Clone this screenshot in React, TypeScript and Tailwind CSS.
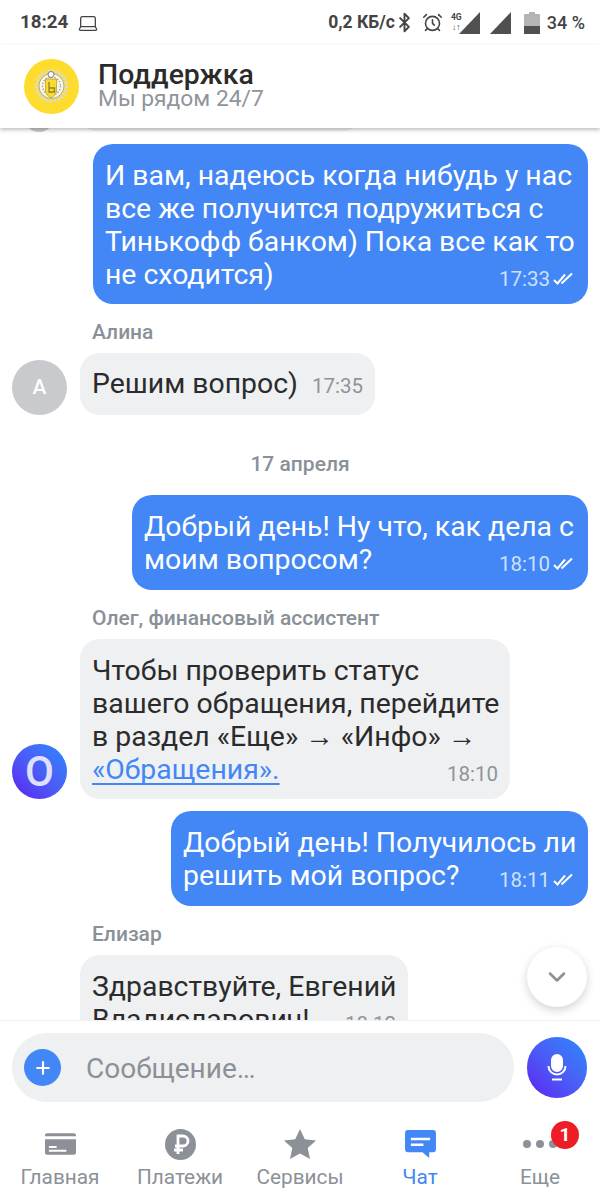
import { AlarmClock, Bluetooth, ChevronDown, Laptop, Plus } from "lucide-react";

const DoubleCheck = () => (
  <svg width="24" height="14" viewBox="0 0 24 14" fill="none" stroke="#ffffff" strokeWidth="2" className="ml-[2px]">
    <path d="M2 8l3.500 3.500L13 2.500" />
    <path d="M9.500 11.500L20 1.500" />
  </svg>
);

const Signal = () => (
  <svg width="21" height="22" viewBox="0 0 21 22">
    <path d="M21 0v22H0z" fill="#505050" />
  </svg>
);

const Logo = () => (
  <svg width="55" height="55" viewBox="0 0 55 55">
    <circle cx="27.5" cy="27.5" r="27.5" fill="#fddc2e" />
    <circle cx="27.5" cy="27" r="15" fill="none" stroke="#dedbc8" strokeWidth="3.500" strokeDasharray="2.200 1.500" />
    <circle cx="27.5" cy="27" r="12.500" fill="#faf8ea" stroke="#8f8f82" strokeWidth="0.7" />
    <circle cx="27.5" cy="27" r="9" fill="none" stroke="#a9a99a" strokeWidth="1.500" strokeDasharray="1.500 1.500" />
    <circle cx="27" cy="15.500" r="3" fill="#fff" stroke="#6f6f66" strokeWidth="0.9" />
    <path d="M21.500 20h11v12c0 3-2.500 5-5.500 7-3-2-5.500-4-5.500-7z" fill="#fbd92f" stroke="#a89a30" strokeWidth="0.7" />
    <path d="M25 23v10h5.500v-4H25" fill="none" stroke="#8f842a" strokeWidth="1.300" />
  </svg>
);

const Lines = ({ lines, stamp }: { lines: React.ReactNode[]; stamp: React.ReactNode }) => (
  <>
    {lines.slice(0, -1).map((line, i) => (
      <div key={i} className="whitespace-nowrap">{line}</div>
    ))}
    <div className="flex justify-between whitespace-nowrap">
      <div>{lines[lines.length - 1]}</div>
      {stamp}
    </div>
  </>
);

const Bubble = ({ className, lines, stamp }: { className: string; lines: React.ReactNode[]; stamp: React.ReactNode }) => (
  <div className={"rounded-[20px] px-[12px] pt-[15px] text-[28.4px] leading-[33px] " + className}>
    <Lines lines={lines} stamp={stamp} />
  </div>
);

const Stamp = ({ time, read }: { time: string; read?: boolean }) => (
  <span className={"flex items-center text-[20.5px] leading-[24px] mt-[8px] ml-3 " + (read ? "text-[#cfe0fc]" : "text-[#8e949b]")}>
    {time}
    {read && <DoubleCheck />}
  </span>
);

const Label = ({ children }: { children: React.ReactNode }) => (
  <div className="shrink-0 text-[21px] leading-[22px] font-medium text-[#8a9097] ml-[92px]">{children}</div>
);

const NavItem = ({ label, active, icon }: { label: string; active?: boolean; icon: React.ReactNode }) => (
  <div className="flex-1 flex flex-col items-center">
    <div className="h-[36px] flex items-center justify-center">{icon}</div>
    <div className={"text-[20.8px] leading-[24px] mt-[3px] " + (active ? "text-[#4287f5]" : "text-[#8c9198]")}>{label}</div>
  </div>
);

export default function App() {
  return (
    <div className="relative w-[600px] h-[1200px] overflow-hidden bg-white flex flex-col font-['Roboto',sans-serif] text-[#2b2b2b]">
      <div className="h-[45px] shrink-0 flex items-center pl-5 pr-[15px] text-[#444]">
        <span className="text-[18.8px] font-bold">18:24</span>
        <Laptop size={22} strokeWidth={1.4} className="ml-[9px]" />
        <span className="ml-auto text-[17.500px] font-bold">0,2 КБ/с</span>
        <Bluetooth size={21} strokeWidth={2.2} className="ml-[-1px]" />
        <AlarmClock size={21} strokeWidth={1.8} className="ml-[7px]" />
        <div className="ml-[7px] w-[13px] h-[22px] flex flex-col items-center text-[8.500px] font-bold leading-[10px] mr-[-4px] relative z-10">
          <span>4G</span>
          <span>↓↑</span>
        </div>
        <Signal />
        <div className="ml-[10px]"><Signal /></div>
        <div className="ml-[13px] w-[16px] flex flex-col items-center">
          <div className="w-[6px] h-[2px] bg-[#b4b4b4]" />
          <div className="w-[16px] h-[20px] rounded-[1px] bg-[#b4b4b4] flex flex-col justify-end">
            <div className="h-[8px] bg-[#505050]" />
          </div>
        </div>
        <span className="ml-[7px] text-[18px] font-medium">34 %</span>
      </div>

      <div className="h-[83px] shrink-0 relative z-10 bg-white shadow-[0_2px_4px_rgba(0,0,0,0.25)] flex items-center pl-6">
        <Logo />
        <div className="ml-[19px] mt-[-2px]">
          <div className="text-[28.4px] leading-[28px] font-medium">Поддержка</div>
          <div className="text-[22.8px] leading-[22px] mt-[-1px] text-[#8f959c]">Мы рядом 24/7</div>
        </div>
      </div>

      <div className="flex-1 min-h-0 overflow-hidden flex flex-col">
        <div className="h-[16px] shrink-0 relative">
          <div className="absolute left-[24px] top-[-30px] w-[30px] h-[34px] rounded-full bg-[#c8cacd]" />
          <div className="absolute left-[80px] top-[-30px] w-[280px] h-[33px] rounded-[20px] bg-[#eff0f2]" />
        </div>

        <div className="shrink-0 self-end mr-3 w-[495px]">
          <Bubble
            className="pb-[13px] bg-[#4287f5] text-white"
            lines={["И вам, надеюсь когда нибудь у нас", "все же получится подружиться с", "Тинькофф банком) Пока все как то", "не сходится)"]}
            stamp={<Stamp time="17:33" read />}
          />
        </div>

        <div className="mt-[17px]"><Label>Алина</Label></div>
        <div className="shrink-0 mt-[10px] flex items-end pl-3">
          <div className="w-[55px] h-[55px] rounded-full bg-[#c8cacd] text-white text-[21px] font-medium flex items-center justify-center">А</div>
          <div className="ml-[13px] h-[62px] rounded-[20px] bg-[#eff0f2] px-[12px] flex items-center text-[28.4px] whitespace-nowrap">
            Решим вопрос)
            <span className="ml-[14px] text-[20.5px] text-[#8e949b] mt-[4px]">17:35</span>
          </div>
        </div>

        <div className="shrink-0 mt-[38px] text-center text-[21px] leading-[22px] font-medium text-[#8a9097]">17 апреля</div>

        <div className="shrink-0 mt-[20px] self-end mr-3 w-[456px]">
          <Bubble
            className="pb-[14px] bg-[#4287f5] text-white"
            lines={["Добрый день! Ну что, как дела с", "моим вопросом?"]}
            stamp={<Stamp time="18:10" read />}
          />
        </div>

        <div className="mt-[17px]"><Label>Олег, финансовый ассистент</Label></div>
        <div className="shrink-0 mt-[10px] flex items-end pl-3">
          <div className="w-[55px] h-[55px] rounded-full bg-gradient-to-tr from-[#5a10f0] to-[#1e8afc] text-[#dfe0fb] text-[42px] font-medium flex items-center justify-center">О</div>
          <div className="ml-[13px] w-[430px]">
            <Bubble
              className="pb-[13px] bg-[#eff0f2]"
              lines={["Чтобы проверить статус", "вашего обращения, перейдите", "в раздел «Еще» → «Инфо» →", <span className="text-[#4287f5] underline underline-offset-4 [text-decoration-skip-ink:none]">«Обращения».</span>]}
              stamp={<Stamp time="18:10" />}
            />
          </div>
        </div>

        <div className="shrink-0 mt-[12px] self-end mr-3 w-[417px]">
          <Bubble
            className="pb-[14px] bg-[#4287f5] text-white"
            lines={["Добрый день! Получилось ли", "решить мой вопрос?"]}
            stamp={<Stamp time="18:11" read />}
          />
        </div>

        <div className="mt-[17px]"><Label>Елизар</Label></div>
        <div className="shrink-0 mt-[10px] ml-20 w-[328px]">
          <Bubble
            className="pb-[13px] bg-[#eff0f2]"
            lines={["Здравствуйте, Евгений", "Владиславович!"]}
            stamp={<Stamp time="18:12" />}
          />
        </div>
      </div>

      <div className="absolute left-[527px] top-[947px] w-[60px] h-[60px] rounded-full bg-white shadow-[0_3px_10px_rgba(0,0,0,0.18)] flex items-center justify-center">
        <ChevronDown size={28} strokeWidth={2.2} className="text-[#8c9198]" />
      </div>

      <div className="h-[180px] shrink-0 bg-white border-t border-[#f0f0f0] flex flex-col">
        <div className="flex items-center px-3 mt-3">
          <div className="w-[502px] h-[69px] rounded-full bg-[#eff0f2] flex items-center pl-[12px]">
            <div className="w-[37px] h-[37px] rounded-full bg-[#4287f5] flex items-center justify-center">
              <Plus size={20} strokeWidth={2.6} className="text-white" />
            </div>
            <span className="ml-[25px] mt-[2px] text-[28px] text-[#8c9198]">Сообщение…</span>
          </div>
          <div className="ml-[13px] w-[60px] h-[61px] rounded-full bg-gradient-to-tr from-[#5a10f0] to-[#1e8afc] flex items-center justify-center">
            <svg width="20" height="27" viewBox="0 0 20 27" fill="none" stroke="#fff" strokeWidth="2">
              <rect x="5" y="1" width="10" height="16" rx="5" fill="#fff" />
              <path d="M1.500 12c0 5 4 8.500 8.500 8.500s8.500-3.500 8.500-8.500" />
              <path d="M5 25.500h10" />
            </svg>
          </div>
        </div>
        <div className="flex mt-[24px]">
          <NavItem label="Главная" icon={
            <svg width="31" height="22" viewBox="0 0 32 22">
              <path d="M2 0h28a2 2 0 0 1 2 2v1H0V2a2 2 0 0 1 2-2zM0 6h32v14a2 2 0 0 1-2 2H2a2 2 0 0 1-2-2z" fill="#8c9198" />
              <path d="M4 13h8v2H4zM4 17h18v2H4z" fill="#fff" />
            </svg>
          } />
          <NavItem label="Платежи" icon={
            <svg width="31" height="31" viewBox="0 0 31 31">
              <circle cx="15.500" cy="15.500" r="15.500" fill="#8c9198" />
              <path d="M13 25V7h5a4.500 4.500 0 0 1 0 10h-8M9 21h9" fill="none" stroke="#fff" strokeWidth="2.800" />
            </svg>
          } />
          <NavItem label="Сервисы" icon={
            <svg width="32" height="30" viewBox="0 0 32 30">
              <path d="M16 0l4.800 10.200 11.200 1.300-8.300 7.600 2.300 10.900L16 24.500 6 30l2.300-10.900L0 11.500l11.200-1.300z" fill="#8c9198" />
            </svg>
          } />
          <NavItem label="Чат" active icon={
            <svg width="31" height="28" viewBox="0 0 32 29">
              <path d="M3 0h26a3 3 0 0 1 3 3v17a3 3 0 0 1-3 3h-4v6l-7-6H3a3 3 0 0 1-3-3V3a3 3 0 0 1 3-3z" fill="#4287f5" />
              <path d="M6 8h20v2.500H6zM6 14h13v2.500H6z" fill="#fff" />
            </svg>
          } />
          <NavItem label="Еще" icon={
            <div className="flex gap-[5px]">
              <div className="w-[8px] h-[8px] rounded-full bg-[#8c9198]" />
              <div className="w-[8px] h-[8px] rounded-full bg-[#8c9198]" />
              <div className="w-[8px] h-[8px] rounded-full bg-[#8c9198]" />
            </div>
          } />
        </div>
      </div>

      <div className="absolute left-[551px] top-[1121px] w-[28px] h-[28px] rounded-full bg-[#ee1c25] text-white text-[19px] font-bold flex items-center justify-center">1</div>
    </div>
  );
}
